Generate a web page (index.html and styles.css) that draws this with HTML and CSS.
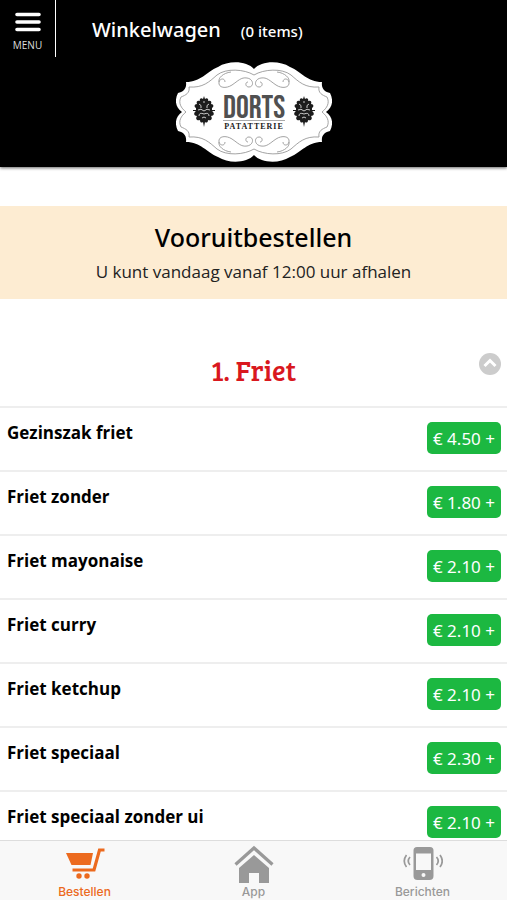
FILE: index.html
```html
<!DOCTYPE html>
<html lang="nl">
<head>
    <meta charset="UTF-8">
    <meta name="viewport" content="width=device-width, initial-scale=1.0">
    <title>Dorts Patatterie</title>
    <link rel="stylesheet" href="styles.css">
</head>
<body>
    <header class="header">
        <div class="top-bar">
            <button class="menu-button" type="button">
                <svg class="menu-icon" width="26" height="20" viewBox="0 0 26 20" aria-hidden="true">
                    <path d="M2 2.5H24M2 10H24M2 17.5H24" stroke="#fff" stroke-width="3.6" stroke-linecap="round"/>
                </svg>
                <span>MENU</span>
            </button>
            <a class="cart" href="#cart">
                <span class="cart-title">Winkelwagen</span>
                <span class="cart-count">(0 items)</span>
            </a>
        </div>
        <svg class="logo" width="156" height="100" viewBox="0 0 156 100" role="img" aria-label="Dorts Patatterie">
            <defs>
                <g id="scroll" fill="none" stroke="#999" stroke-width="0.9">
                    <path d="M78 13C68 7 50 6 41 13C33 20 27 26 13 25C14 31 10 33 5 35C2 41 5 46 10 50"/>
                    <path d="M49 20C49 16 44 16 43 20C42 26 50 27 56 23C62 19 65 15 71 16C78 17 78 25 73 25C69 25 69 20 72 20"/>
                    <path d="M43 20C42 16 47 11 55 10"/>
                </g>
                <g id="crest">
                    <path d="M0-15L1-12C3-14 5-12 4-10C7-11 8-9 7-7C10-7 10-4 8-3L8-1H11V0H8C11 2 10 5 7 5C9 8 7 10 4 9C4 12 2 12 1 11L0 16-1 11C-2 12-4 12-4 9C-7 10-9 8-7 5C-10 5-11 2-8 0H-11V-1H-8L-8-3C-10-4-10-7-7-7C-8-9-7-11-4-10C-5-12-3-14-1-12Z" fill="#1c1c1c"/>
                    <path d="M-5-7Q-2-6-3-3M5-7Q2-6 3-3M-6-1Q-3-3 0 0Q3-3 6-1M-5 5Q-5 1 0 3Q5 1 5 5M-2 7Q0 5 2 7M-1-9H1" fill="none" stroke="#ddd" stroke-width="0.9"/>
                </g>
            </defs>
            <path d="M78 7C85-1 103-2 114 5C126 10 131 20 146 20C145 27 149 30 154 31C158 39 156 46 150 50C156 54 158 61 154 69C149 70 145 73 146 80C131 80 126 90 114 95C103 102 85 101 78 93C71 101 53 102 42 95C30 90 25 80 10 80C11 73 7 70 2 69C-2 61 0 54 6 50C0 46-2 39 2 31C7 30 11 27 10 20C25 20 30 10 42 5C53-2 71-1 78 7Z" fill="#fff"/>
            <use href="#scroll"/>
            <use href="#scroll" transform="translate(156 0) scale(-1 1)"/>
            <use href="#scroll" transform="translate(0 100) scale(1 -1)"/>
            <use href="#scroll" transform="translate(156 100) scale(-1 -1)"/>
            <use href="#crest" x="28" y="49"/>
            <use href="#crest" x="128" y="49"/>
            <text class="logo-name" x="78" y="56" text-anchor="middle">DORTS</text>
            <path d="M47 58.500H109" stroke="#aaa" stroke-width="1"/>
            <text class="logo-sub" x="78" y="67" text-anchor="middle">PATATTERIE</text>
        </svg>
    </header>

    <main class="content">
        <section class="notice">
            <h1>Vooruitbestellen</h1>
            <p>U kunt vandaag vanaf 12:00 uur afhalen</p>
        </section>

        <section class="category">
            <div class="category-header">
                <h2>1. Friet</h2>
                <button class="collapse-button" type="button" aria-label="Inklappen">
                    <svg width="24" height="24" viewBox="0 0 24 24" aria-hidden="true">
                        <circle cx="12" cy="12" r="11" fill="#ccc"/>
                        <path d="M6.500 14L12 8.500L17.500 14" fill="none" stroke="#fff" stroke-width="3"/>
                    </svg>
                </button>
            </div>
            <ul class="product-list">
                <li class="product"><h3>Gezinszak friet</h3><button class="add-button" type="button">€ 4.50 +</button></li>
                <li class="product"><h3>Friet zonder</h3><button class="add-button" type="button">€ 1.80 +</button></li>
                <li class="product"><h3>Friet mayonaise</h3><button class="add-button" type="button">€ 2.10 +</button></li>
                <li class="product"><h3>Friet curry</h3><button class="add-button" type="button">€ 2.10 +</button></li>
                <li class="product"><h3>Friet ketchup</h3><button class="add-button" type="button">€ 2.10 +</button></li>
                <li class="product"><h3>Friet speciaal</h3><button class="add-button" type="button">€ 2.30 +</button></li>
                <li class="product"><h3>Friet speciaal zonder ui</h3><button class="add-button" type="button">€ 2.10 +</button></li>
            </ul>
        </section>
    </main>

    <nav class="tab-bar">
        <a class="tab active" href="#bestellen">
            <svg width="40" height="40" viewBox="0 0 40 40" fill="currentColor" aria-hidden="true">
                <path d="M1 8H28L25.500 20H6.500Z"/>
                <path d="M39.500 5H34.500L29 25H7.500" fill="none" stroke="currentColor" stroke-width="3.200"/>
                <circle cx="14" cy="31" r="2.700"/>
                <circle cx="22" cy="31" r="2.700"/>
            </svg>
            <span>Bestellen</span>
        </a>
        <a class="tab" href="#app">
            <svg width="40" height="40" viewBox="0 0 40 40" fill="currentColor" aria-hidden="true">
                <path d="M20 10L35 23V38H25V28H15V38H5V23Z"/>
                <path d="M1.500 19.500L20 3L38.500 19.500" fill="none" stroke="currentColor" stroke-width="3.200"/>
            </svg>
            <span>App</span>
        </a>
        <a class="tab" href="#berichten">
            <svg width="40" height="40" viewBox="0 0 40 40" fill="currentColor" aria-hidden="true">
                <path fill-rule="evenodd" d="M14 2H27Q30.500 2 30.500 5.500V31Q30.500 35 26.500 35H14.500Q10.500 35 10.500 31V5.500Q10.500 2 14 2ZM13 8.500V25H28V8.500ZM20.500 28A2 2 0 1 0 20.500 32A2 2 0 1 0 20.500 28Z"/>
                <path d="M3.500 10Q-1 16 3.500 22M7 12Q3.500 16 7 20M37 10Q41.500 16 37 22M33.500 12Q37 16 33.500 20" fill="none" stroke="currentColor" stroke-width="1.700"/>
            </svg>
            <span>Berichten</span>
        </a>
    </nav>
</body>
</html>
```
FILE: styles.css
```css
* {
    box-sizing: border-box;
}
body {
    margin: 0;
    height: 100vh;
    display: flex;
    flex-direction: column;
    background: #fff;
    color: #000;
    font-family: "Noto Sans", "Open Sans", sans-serif;
}
h1, h2, h3, p, ul {
    margin: 0;
    padding: 0;
}
button {
    font-family: inherit;
    border: none;
    cursor: pointer;
}
a {
    color: inherit;
    text-decoration: none;
}

/* Header */
.header {
    flex: none;
    display: flex;
    flex-direction: column;
    align-items: center;
    gap: 5px;
    padding-bottom: 5px;
    background: #000;
    color: #fff;
    box-shadow: 0 1px 3px rgba(0, 0, 0, 0.6);
}
.top-bar {
    display: flex;
    align-self: stretch;
    gap: 36px;
}
.menu-button {
    display: flex;
    flex-direction: column;
    align-items: center;
    gap: 6px;
    width: 56px;
    height: 57px;
    padding: 12px 0 0;
    background: none;
    border-right: 1px solid #fff;
    color: #ddd;
    font-family: "Open Sans", sans-serif;
    font-size: 10px;
    line-height: 14px;
}
.menu-icon {
    flex: none;
}
.cart {
    display: flex;
    align-items: baseline;
    gap: 20px;
    padding-top: 16px;
    font-weight: 500;
}
.cart-title {
    font-size: 20px;
    line-height: 28px;
}
.cart-count {
    font-size: 15px;
}
.logo-name {
    fill: #505050;
    font-family: "Bebas Neue", "Roboto Condensed", "Liberation Sans Narrow", sans-serif;
    font-size: 32px;
    font-weight: 400;
}
.logo-sub {
    fill: #222;
    font-family: "Liberation Serif", serif;
    font-size: 8px;
    font-weight: 700;
    letter-spacing: 1px;
}

/* Content */
.content {
    flex: 1;
    min-height: 0;
    overflow-y: auto;
    scrollbar-width: none;
    padding-top: 39px;
}
.notice {
    padding: 13px 8px 15px;
    background: #fdecd2;
    text-align: center;
}
.notice h1 {
    font-size: 25px;
    font-weight: 500;
    line-height: 36px;
}
.notice p {
    padding-top: 5px;
    font-family: "Open Sans", sans-serif;
    font-size: 17px;
    line-height: 24px;
    color: #222;
}
.category {
    padding-top: 53px;
}
.category-header {
    display: grid;
    grid-template-columns: 1fr auto 1fr;
    align-items: start;
    height: 54px;
    padding: 0 5px;
}
.category-header h2 {
    grid-column: 2;
    color: #d9181e;
    font-family: "Bree Serif", "DejaVu Serif Condensed", "DejaVu Serif", serif;
    font-size: 28px;
    font-weight: 400;
    line-height: 36px;
}
.collapse-button {
    justify-self: end;
    display: flex;
    padding: 0;
    background: none;
}
.product-list {
    list-style: none;
}
.product {
    display: flex;
    justify-content: space-between;
    height: 64px;
    padding: 14px 6px 0 7px;
    border-top: 2px solid #eee;
}
.product h3 {
    font-family: "Open Sans", sans-serif;
    font-size: 17px;
    line-height: 22px;
}
.add-button {
    align-self: flex-start;
    height: 32px;
    padding: 0 6px;
    border-radius: 5px;
    background: #1cb841;
    color: #fff;
    font-size: 17px;
}

/* Tab bar */
.tab-bar {
    flex: none;
    display: flex;
    height: 60px;
    border-top: 1px solid #ddd;
    background: #f8f8f8;
}
.tab {
    flex: 1;
    display: flex;
    flex-direction: column;
    align-items: center;
    padding-top: 4px;
    color: #999;
    font-family: Inter, "Liberation Sans", sans-serif;
    font-size: 12px;
    font-weight: 500;
    line-height: 14px;
}
.tab.active {
    color: #ec6a1e;
}
```
